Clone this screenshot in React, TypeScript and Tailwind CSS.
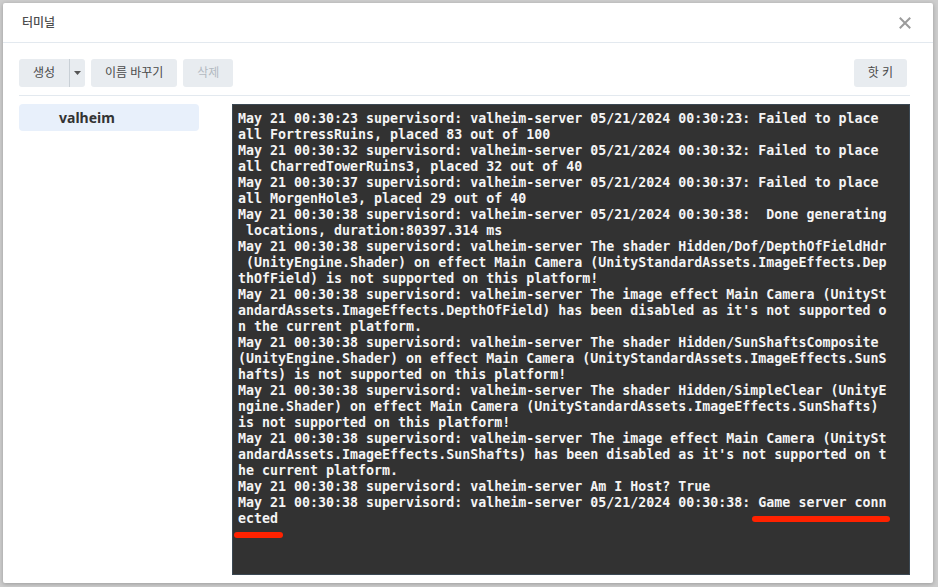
import React from "react";

const COLS = 81;

const logLines = [
  "May 21 00:30:23 supervisord: valheim-server 05/21/2024 00:30:23: Failed to place all FortressRuins, placed 83 out of 100",
  "May 21 00:30:32 supervisord: valheim-server 05/21/2024 00:30:32: Failed to place all CharredTowerRuins3, placed 32 out of 40",
  "May 21 00:30:37 supervisord: valheim-server 05/21/2024 00:30:37: Failed to place all MorgenHole3, placed 29 out of 40",
  "May 21 00:30:38 supervisord: valheim-server 05/21/2024 00:30:38:  Done generating locations, duration:80397.314 ms",
  "May 21 00:30:38 supervisord: valheim-server The shader Hidden/Dof/DepthOfFieldHdr (UnityEngine.Shader) on effect Main Camera (UnityStandardAssets.ImageEffects.DepthOfField) is not supported on this platform!",
  "May 21 00:30:38 supervisord: valheim-server The image effect Main Camera (UnityStandardAssets.ImageEffects.DepthOfField) has been disabled as it's not supported on the current platform.",
  "May 21 00:30:38 supervisord: valheim-server The shader Hidden/SunShaftsComposite (UnityEngine.Shader) on effect Main Camera (UnityStandardAssets.ImageEffects.SunShafts) is not supported on this platform!",
  "May 21 00:30:38 supervisord: valheim-server The shader Hidden/SimpleClear (UnityEngine.Shader) on effect Main Camera (UnityStandardAssets.ImageEffects.SunShafts) is not supported on this platform!",
  "May 21 00:30:38 supervisord: valheim-server The image effect Main Camera (UnityStandardAssets.ImageEffects.SunShafts) has been disabled as it's not supported on the current platform.",
  "May 21 00:30:38 supervisord: valheim-server Am I Host? True",
  "May 21 00:30:38 supervisord: valheim-server 05/21/2024 00:30:38: Game server connected",
];

// terminal wraps on a fixed character grid, not on words
const gridRows = logLines.flatMap((line) => {
  const rows: string[] = [];
  for (let i = 0; i < line.length; i += COLS) rows.push(line.slice(i, i + COLS));
  return rows;
});

const Button = ({ label, disabled }: { label: string; disabled?: boolean }) => (
  <button
    className={`h-[28px] px-[14px] rounded-[3px] bg-[#e8ecf0] text-[12px] ${
      disabled ? "text-[#b3bac1]" : "text-[#4a4a4a]"
    }`}
  >
    {label}
  </button>
);

const App = () => {
  return (
    <div
      className="w-[938px] h-[587px] bg-[#cdcdcd] pt-[3px] pl-[3px] pr-[5px] pb-[4px]"
      style={{ fontFamily: '"Noto Sans", "Noto Sans CJK KR", sans-serif' }}
    >
      <div className="h-full bg-white rounded-[2px] shadow-[0_1px_4px_rgba(0,0,0,0.25)] flex flex-col">
        {/* header */}
        <div className="h-[40px] shrink-0 border-b border-[#e3e9ef] flex items-center justify-between pl-[19px] pr-[22px]">
          <span className="text-[12px] font-medium text-[#4d4d4d]">터미널</span>
          <svg width="12" height="12" viewBox="0 0 12 12">
            <path d="M1.5 1.5 L10.5 10.5 M10.5 1.5 L1.5 10.5" stroke="#9b9b9b" strokeWidth="2" strokeLinecap="square" />
          </svg>
        </div>

        <div className="flex-1 flex flex-col pl-[16px] pr-[23px]">
          {/* toolbar */}
          <div className="shrink-0 pt-[16px] pb-[8px] border-b border-[#e3e9ef] flex items-center justify-between">
            <div className="flex gap-[6px]">
              <div className="h-[28px] flex items-center rounded-[3px] bg-[#e8ecf0] text-[12px] text-[#4a4a4a]">
                <span className="w-[50px] text-center">생성</span>
                <span className="w-px h-full bg-[#c9d0d6]" />
                <span className="w-[15px] flex justify-center">
                  <svg width="7" height="4" viewBox="0 0 7 4">
                    <path d="M0 0 L7 0 L3.5 4 Z" fill="#555" />
                  </svg>
                </span>
              </div>
              <Button label="이름 바꾸기" />
              <Button label="삭제" disabled />
            </div>
            <div className="mr-[3px]">
              <Button label="핫 키" />
            </div>
          </div>

          {/* content */}
          <div className="flex-1 flex pt-[8px] pb-[8px] gap-[33px] min-h-0">
            <div className="w-[180px] shrink-0">
              <div className="h-[27px] rounded-[4px] bg-[#e8f0fb] flex items-center pl-[40px] text-[14px] font-bold text-[#333]">
                valheim
              </div>
            </div>

            <div className="relative flex-1 bg-[#323232] border border-[#3b4853] pt-[6px] pl-[5px] overflow-hidden">
              <div
                className="text-[13.3px] leading-[16px] font-bold text-[#f4f4f4]"
                style={{ fontFamily: '"DejaVu Sans Mono", "Liberation Mono", monospace' }}
              >
                {gridRows.map((row, i) => (
                  <div key={i} className="whitespace-pre">
                    {row}
                  </div>
                ))}
              </div>
              {/* red annotation marks */}
              <div className="absolute left-[519px] top-[411px] w-[138px] h-[6px] rounded-full bg-[#ff2200]" />
              <div className="absolute left-[1px] top-[427px] w-[49px] h-[6px] rounded-full bg-[#ff2200]" />
            </div>
          </div>
        </div>
      </div>
    </div>
  );
};

export default App;
